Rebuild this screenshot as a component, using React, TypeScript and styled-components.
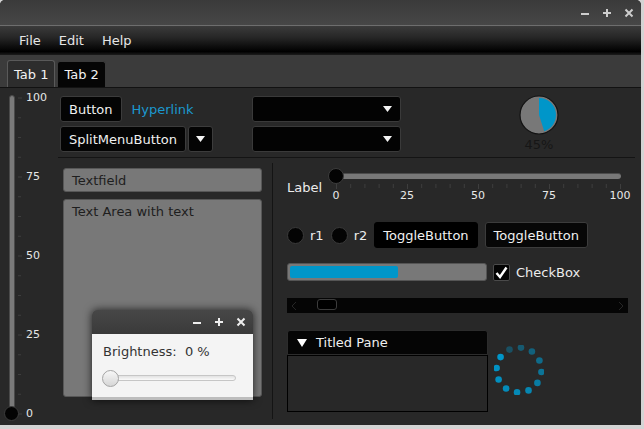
import styled, { createGlobalStyle } from "styled-components";

const GlobalStyle = createGlobalStyle`
  * { box-sizing: border-box; }
  html, body { margin: 0; padding: 0; }
  body {
    background: #d4d4d4;
    font-family: "DejaVu Sans", "Liberation Sans", sans-serif;
    font-size: 13px;
    color: #e8e8e8;
  }
`;

const ACCENT = "#0096c9";

function WinControls({ color, padRight }: { color: string; padRight: number }) {
  return (
    <Controls $padRight={padRight}>
      <svg width="10" height="10" viewBox="0 0 10 10">
        <path d="M1 6h8" stroke={color} strokeWidth="2" />
      </svg>
      <svg width="10" height="10" viewBox="0 0 10 10">
        <path d="M5 1v8M1 5h8" stroke={color} strokeWidth="2" />
      </svg>
      <svg width="10" height="10" viewBox="0 0 10 10">
        <path d="M1.5 1.5l7 7M8.5 1.5l-7 7" stroke={color} strokeWidth="2" />
      </svg>
    </Controls>
  );
}

function DownArrow({ color = "#f4f4f4" }: { color?: string }) {
  return (
    <svg width="9" height="6" viewBox="0 0 9 6">
      <path d="M0 0h9L4.5 6z" fill={color} />
    </svg>
  );
}

function VTicks() {
  const lines = [];
  for (let i = 0; i <= 16; i++) {
    const y = 7 + i * 19.75;
    lines.push(
      <line key={i} x1="3" x2={i % 4 === 0 ? 7 : 6} y1={y} y2={y} stroke="#3e3e3e" strokeWidth="1" />
    );
  }
  return (
    <svg width="11" height="330" viewBox="0 0 11 330">
      {lines}
    </svg>
  );
}

function HTicks() {
  const lines = [];
  for (let i = 0; i <= 20; i++) {
    const x = 8.5 + i * 14.2;
    lines.push(
      <line key={i} x1={x} x2={x} y1="0" y2={i % 5 === 0 ? 5 : 4} stroke="#3e3e3e" strokeWidth="1" />
    );
  }
  return (
    <svg width="300" height="6" viewBox="0 0 300 6">
      {lines}
    </svg>
  );
}

function Pie() {
  const a = (162 * Math.PI) / 180;
  const ex = 20 + 17 * Math.sin(a);
  const ey = 20 - 17 * Math.cos(a);
  return (
    <svg width="40" height="40" viewBox="0 0 40 40">
      <circle cx="20" cy="20" r="19" fill="#787878" stroke="#121212" strokeWidth="1.2" />
      <path d={`M20 20 L20 3 A17 17 0 0 1 ${ex} ${ey} Z`} fill={ACCENT} />
    </svg>
  );
}

function Spinner() {
  const dots = [];
  for (let i = 0; i < 12; i++) {
    const deg = 215 - i * 30;
    const r = (deg * Math.PI) / 180;
    const op = i < 5 ? 1 - i * 0.03 : 0.85 - (i - 5) * 0.08;
    dots.push(
      <circle
        key={i}
        cx={25 + 22.5 * Math.cos(r)}
        cy={25 + 22.5 * Math.sin(r)}
        r="3.3"
        fill={ACCENT}
        opacity={op}
      />
    );
  }
  return (
    <svg width="50" height="50" viewBox="0 0 50 50">
      {dots}
    </svg>
  );
}

export default function App() {
  return (
    <>
      <GlobalStyle />
      <Window>
        <TitleBar>
          <WinControls color="#cdcdcd" padRight={7} />
        </TitleBar>
        <MenuBar>
          {["File", "Edit", "Help"].map((m) => (
            <MenuItem key={m}>{m}</MenuItem>
          ))}
        </MenuBar>
        <TabHeader>
          <Tab $selected>Tab 1</Tab>
          <Tab>Tab 2</Tab>
        </TabHeader>

        <Content>
          <VSlider>
            <VTrack>
              <VThumb />
            </VTrack>
            <VTicks />
            <VLabels>
              {["100", "75", "50", "25", "0"].map((l) => (
                <span key={l}>{l}</span>
              ))}
            </VLabels>
          </VSlider>

          <Main>
            <TopSection>
              <ButtonGroup>
                <Row>
                  <DarkButton>Button</DarkButton>
                  <Hyperlink>Hyperlink</Hyperlink>
                </Row>
                <Row>
                  <DarkButton>SplitMenuButton</DarkButton>
                  <ArrowButton>
                    <DownArrow />
                  </ArrowButton>
                </Row>
              </ButtonGroup>
              <ComboColumn>
                <Combo>
                  <DownArrow />
                </Combo>
                <Combo>
                  <DownArrow />
                </Combo>
              </ComboColumn>
              <PieBox>
                <Pie />
                <PieText>45%</PieText>
              </PieBox>
            </TopSection>

            <HSeparator />

            <BottomSection>
              <LeftCol>
                <TextField>Textfield</TextField>
                <TextArea>Text Area with text</TextArea>
              </LeftCol>

              <VSeparator />

              <RightCol>
                <SliderRow>
                  <SliderLabel>Label</SliderLabel>
                  <HSlider>
                    <HTrackRow>
                      <HTrack />
                      <HThumb />
                    </HTrackRow>
                    <HTicks />
                    <HLabels>
                      {["0", "25", "50", "75", "100"].map((l) => (
                        <span key={l}>{l}</span>
                      ))}
                    </HLabels>
                  </HSlider>
                </SliderRow>

                <RadioRow>
                  <Radio>
                    <RadioDot />
                    r1
                  </Radio>
                  <Radio>
                    <RadioDot />
                    r2
                  </Radio>
                  <ToggleButton $selected>ToggleButton</ToggleButton>
                  <ToggleButton>ToggleButton</ToggleButton>
                </RadioRow>

                <ProgressRow>
                  <ProgressBar>
                    <ProgressFill $width={108} />
                  </ProgressBar>
                  <Check>
                    <CheckBox>
                      <svg width="13" height="13" viewBox="0 0 13 13">
                        <path d="M1.5 7l3.5 4L11.5 1.5" stroke="#fff" strokeWidth="2.4" fill="none" />
                      </svg>
                    </CheckBox>
                    CheckBox
                  </Check>
                </ProgressRow>

                <ScrollBar>
                  <svg width="8" height="10" viewBox="0 0 8 10">
                    <path d="M6 1L2 5l4 4" stroke="#262626" strokeWidth="1" fill="none" />
                  </svg>
                  <ScrollThumb />
                  <ScrollSpacer />
                  <svg width="8" height="10" viewBox="0 0 8 10">
                    <path d="M2 1l4 4-4 4" stroke="#262626" strokeWidth="1" fill="none" />
                  </svg>
                </ScrollBar>

                <PaneRow>
                  <TitledPane>
                    <PaneHeader>
                      <svg width="10" height="8" viewBox="0 0 10 8">
                        <path d="M0 0h10L5 8z" fill="#fff" />
                      </svg>
                      Titled Pane
                    </PaneHeader>
                    <PaneBody />
                  </TitledPane>
                  <SpinnerBox>
                    <Spinner />
                  </SpinnerBox>
                </PaneRow>
              </RightCol>
            </BottomSection>
          </Main>
        </Content>

        <FloatWindow>
          <FloatTitle>
            <WinControls color="#eeeeee" padRight={7} />
          </FloatTitle>
          <FloatBody>
            <FloatText>Brightness:  0 %</FloatText>
            <LightSlider>
              <LightTrack />
              <LightThumb />
            </LightSlider>
          </FloatBody>
        </FloatWindow>
      </Window>
    </>
  );
}

const Window = styled.div`
  position: relative;
  width: 641px;
  height: 425px;
  display: flex;
  flex-direction: column;
  background: #282828;
  border-radius: 5px 5px 0 0;
  overflow: hidden;
`;

const TitleBar = styled.div`
  height: 26px;
  display: flex;
  align-items: center;
  justify-content: flex-end;
  background: linear-gradient(#3a3a3a, #474747);
  border-bottom: 1px solid #6e6e6e;
`;

const Controls = styled.div<{ $padRight: number }>`
  display: flex;
  align-items: center;
  gap: 12px;
  padding-right: ${({ $padRight }) => $padRight}px;
`;

const MenuBar = styled.div`
  height: 29px;
  display: flex;
  align-items: center;
  padding-left: 10px;
  background: linear-gradient(#3b3b3b 0%, #262626 40%, #000 88%, #1c1c1c 100%);
`;

const MenuItem = styled.span`
  padding: 0 9px;
  color: #e6e6e6;
`;

const TabHeader = styled.div`
  height: 33px;
  display: flex;
  align-items: flex-end;
  gap: 2px;
  padding-left: 7px;
  background: #3b3b3b;
  border-bottom: 1px solid #121212;
`;

const Tab = styled.div<{ $selected?: boolean }>`
  height: ${({ $selected }) => ($selected ? 27 : 26)}px;
  padding: 0 6px;
  display: flex;
  align-items: center;
  border-radius: 3px 3px 0 0;
  border: 1px solid ${({ $selected }) => ($selected ? "#5a5a5a" : "#3a3a3a")};
  border-bottom: none;
  background: ${({ $selected }) => ($selected ? "#2d2d2d" : "#050505")};
  color: #f2f2f2;
`;

const Content = styled.div`
  flex: 1;
  display: flex;
  min-height: 0;
`;

const VSlider = styled.div`
  width: 58px;
  display: flex;
  padding: 3px 0 0 9px;
`;

const VTrack = styled.div`
  position: relative;
  width: 6px;
  height: 316px;
  margin-top: 4px;
  border-radius: 3px;
  background: #7a7a7a;
  border: 1px solid #4a4a4a;
`;

const VThumb = styled.div`
  position: absolute;
  left: -6px;
  bottom: -11px;
  width: 15px;
  height: 15px;
  border-radius: 50%;
  background: #030303;
  border: 1px solid #3c3c3c;
`;

const VLabels = styled.div`
  height: 330px;
  display: flex;
  flex-direction: column;
  justify-content: space-between;
  font-size: 11px;
  line-height: 14px;
  color: #e6e6e6;
`;

const Main = styled.div`
  flex: 1;
  display: flex;
  flex-direction: column;
  padding-right: 6px;
`;

const TopSection = styled.div`
  display: flex;
  padding: 8px 0 0 2px;
`;

const ButtonGroup = styled.div`
  width: 192px;
  display: flex;
  flex-direction: column;
  gap: 4px;
`;

const Row = styled.div`
  display: flex;
  align-items: center;
  gap: 2px;
`;

const DarkButton = styled.div`
  height: 26px;
  padding: 0 8px;
  display: flex;
  align-items: center;
  background: #040404;
  border: 1px solid #3c3c3c;
  border-radius: 3px;
  color: #f0f0f0;
`;

const ArrowButton = styled(DarkButton)`
  width: 25px;
  padding: 0;
  justify-content: center;
`;

const Hyperlink = styled.span`
  margin-left: 8px;
  color: #1b98cf;
`;

const ComboColumn = styled.div`
  width: 149px;
  display: flex;
  flex-direction: column;
  gap: 4px;
`;

const Combo = styled.div`
  height: 26px;
  display: flex;
  align-items: center;
  justify-content: flex-end;
  padding-right: 8px;
  background: #030303;
  border: 1px solid #3a3a3a;
  border-radius: 3px;
`;

const PieBox = styled.div`
  margin: -1px 0 0 118px;
  width: 40px;
  display: flex;
  flex-direction: column;
  align-items: center;
`;

const PieText = styled.span`
  margin-top: 2px;
  line-height: 15px;
  color: #161616;
`;

const HSeparator = styled.div`
  height: 1px;
  margin-top: 5px;
  background: #141414;
`;

const BottomSection = styled.div`
  flex: 1;
  display: flex;
`;

const LeftCol = styled.div`
  width: 204px;
  display: flex;
  flex-direction: column;
  gap: 7px;
  padding: 10px 0 0 5px;
`;

const TextField = styled.div`
  height: 24px;
  display: flex;
  align-items: center;
  padding-left: 8px;
  background: #787878;
  border: 1px solid #575757;
  border-radius: 3px;
  color: #1e1e1e;
`;

const TextArea = styled.div`
  height: 198px;
  padding: 4px 8px;
  background: #787878;
  border: 1px solid #575757;
  border-radius: 3px;
  color: #1e1e1e;
`;

const VSeparator = styled.div`
  width: 1px;
  margin: 5px 0 6px 10px;
  background: #141414;
`;

const RightCol = styled.div`
  width: 341px;
  margin-left: 14px;
  padding-top: 10px;
  display: flex;
  flex-direction: column;
`;

const SliderRow = styled.div`
  display: flex;
  gap: 6px;
`;

const SliderLabel = styled.span`
  margin-top: 12px;
  line-height: 16px;
  color: #ececec;
`;

const HSlider = styled.div`
  width: 300px;
  display: flex;
  flex-direction: column;
`;

const HTrackRow = styled.div`
  position: relative;
  height: 16px;
  padding: 5px 0 0 2px;
`;

const HTrack = styled.div`
  width: 291px;
  height: 6px;
  border-radius: 3px;
  background: #787878;
  border-top: 1px solid #4c4c4c;
`;

const HThumb = styled.div`
  position: absolute;
  left: 0;
  top: 0;
  width: 16px;
  height: 16px;
  border-radius: 50%;
  background: #030303;
  border: 1px solid #3c3c3c;
`;

const HLabels = styled.div`
  width: 314px;
  margin-left: -7px;
  display: flex;
  justify-content: space-between;
  font-size: 11px;
  line-height: 12px;

  span {
    width: 30px;
    text-align: center;
  }
`;

const RadioRow = styled.div`
  margin-top: 20px;
  height: 26px;
  display: flex;
  align-items: center;
  gap: 7px;
`;

const Radio = styled.div`
  display: flex;
  align-items: center;
  gap: 6px;
  color: #ececec;
`;

const RadioDot = styled.span`
  width: 17px;
  height: 17px;
  border-radius: 50%;
  background: #040404;
  border: 1px solid #3a3a3a;
`;

const ToggleButton = styled.div<{ $selected?: boolean }>`
  height: 26px;
  padding: 0 8px;
  display: flex;
  align-items: center;
  border-radius: 3px;
  background: ${({ $selected }) => ($selected ? "#000" : "#070707")};
  border: 1px solid ${({ $selected }) => ($selected ? "#000" : "#3c3c3c")};
  color: #f0f0f0;
`;

const ProgressRow = styled.div`
  margin-top: 15px;
  display: flex;
  align-items: center;
  gap: 6px;
`;

const ProgressBar = styled.div`
  width: 200px;
  height: 18px;
  padding: 2px;
  background: #787878;
  border: 1px solid #555;
  border-radius: 3px;
`;

const ProgressFill = styled.div<{ $width: number }>`
  width: ${({ $width }) => $width}px;
  height: 100%;
  border-radius: 2px;
  background: ${ACCENT};
`;

const Check = styled.div`
  display: flex;
  align-items: center;
  gap: 6px;
  color: #ececec;
`;

const CheckBox = styled.span`
  width: 17px;
  height: 17px;
  display: flex;
  align-items: center;
  justify-content: center;
  background: #030303;
  border: 1px solid #4a4a4a;
  border-radius: 2px;
`;

const ScrollBar = styled.div`
  margin-top: 17px;
  height: 15px;
  display: flex;
  align-items: center;
  padding: 0 3px;
  background: #050505;
`;

const ScrollThumb = styled.span`
  width: 20px;
  height: 11px;
  margin: 0 0 2px 19px;
  border-radius: 3px;
  background: #000;
  border: 1px solid #3c3c3c;
`;

const ScrollSpacer = styled.span`
  flex: 1;
`;

const PaneRow = styled.div`
  margin-top: 17px;
  display: flex;
`;

const TitledPane = styled.div`
  width: 201px;
  height: 82px;
  display: flex;
  flex-direction: column;
`;

const PaneHeader = styled.div`
  height: 25px;
  display: flex;
  align-items: center;
  gap: 9px;
  padding-left: 9px;
  background: #050505;
  border: 1px solid #2c2c2c;
  border-radius: 3px 3px 0 0;
  color: #f0f0f0;
`;

const PaneBody = styled.div`
  flex: 1;
  background: #282828;
  border: 1px solid #000;
`;

const SpinnerBox = styled.div`
  margin: 15px 0 0 6px;
`;

const FloatWindow = styled.div`
  position: absolute;
  left: 92px;
  top: 310px;
  width: 161px;
  height: 90px;
  display: flex;
  flex-direction: column;
  border-radius: 5px 5px 0 0;
  box-shadow: 0 0 9px rgba(0, 0, 0, 0.75);
`;

const FloatTitle = styled.div`
  height: 24px;
  display: flex;
  align-items: center;
  justify-content: flex-end;
  border-radius: 5px 5px 0 0;
  background: linear-gradient(#474747, #3a3a3a);
`;

const FloatBody = styled.div`
  flex: 1;
  padding: 10px 11px 0;
  background: #f4f4f4;
  border-bottom: 3px solid #bdbdbd;
`;

const FloatText = styled.div`
  line-height: 16px;
  white-space: pre;
  color: #333;
`;

const LightSlider = styled.div`
  position: relative;
  margin-top: 10px;
  height: 17px;
  padding-top: 5px;
`;

const LightTrack = styled.div`
  width: 133px;
  height: 6px;
  border-radius: 3px;
  background: linear-gradient(#e2e2e2, #fafafa);
  border: 1px solid #c6c6c6;
`;

const LightThumb = styled.div`
  position: absolute;
  left: -1px;
  top: 0;
  width: 17px;
  height: 17px;
  border-radius: 50%;
  background: linear-gradient(#f7f7f7, #d6d6d6);
  border: 1px solid #a4a4a4;
`;
